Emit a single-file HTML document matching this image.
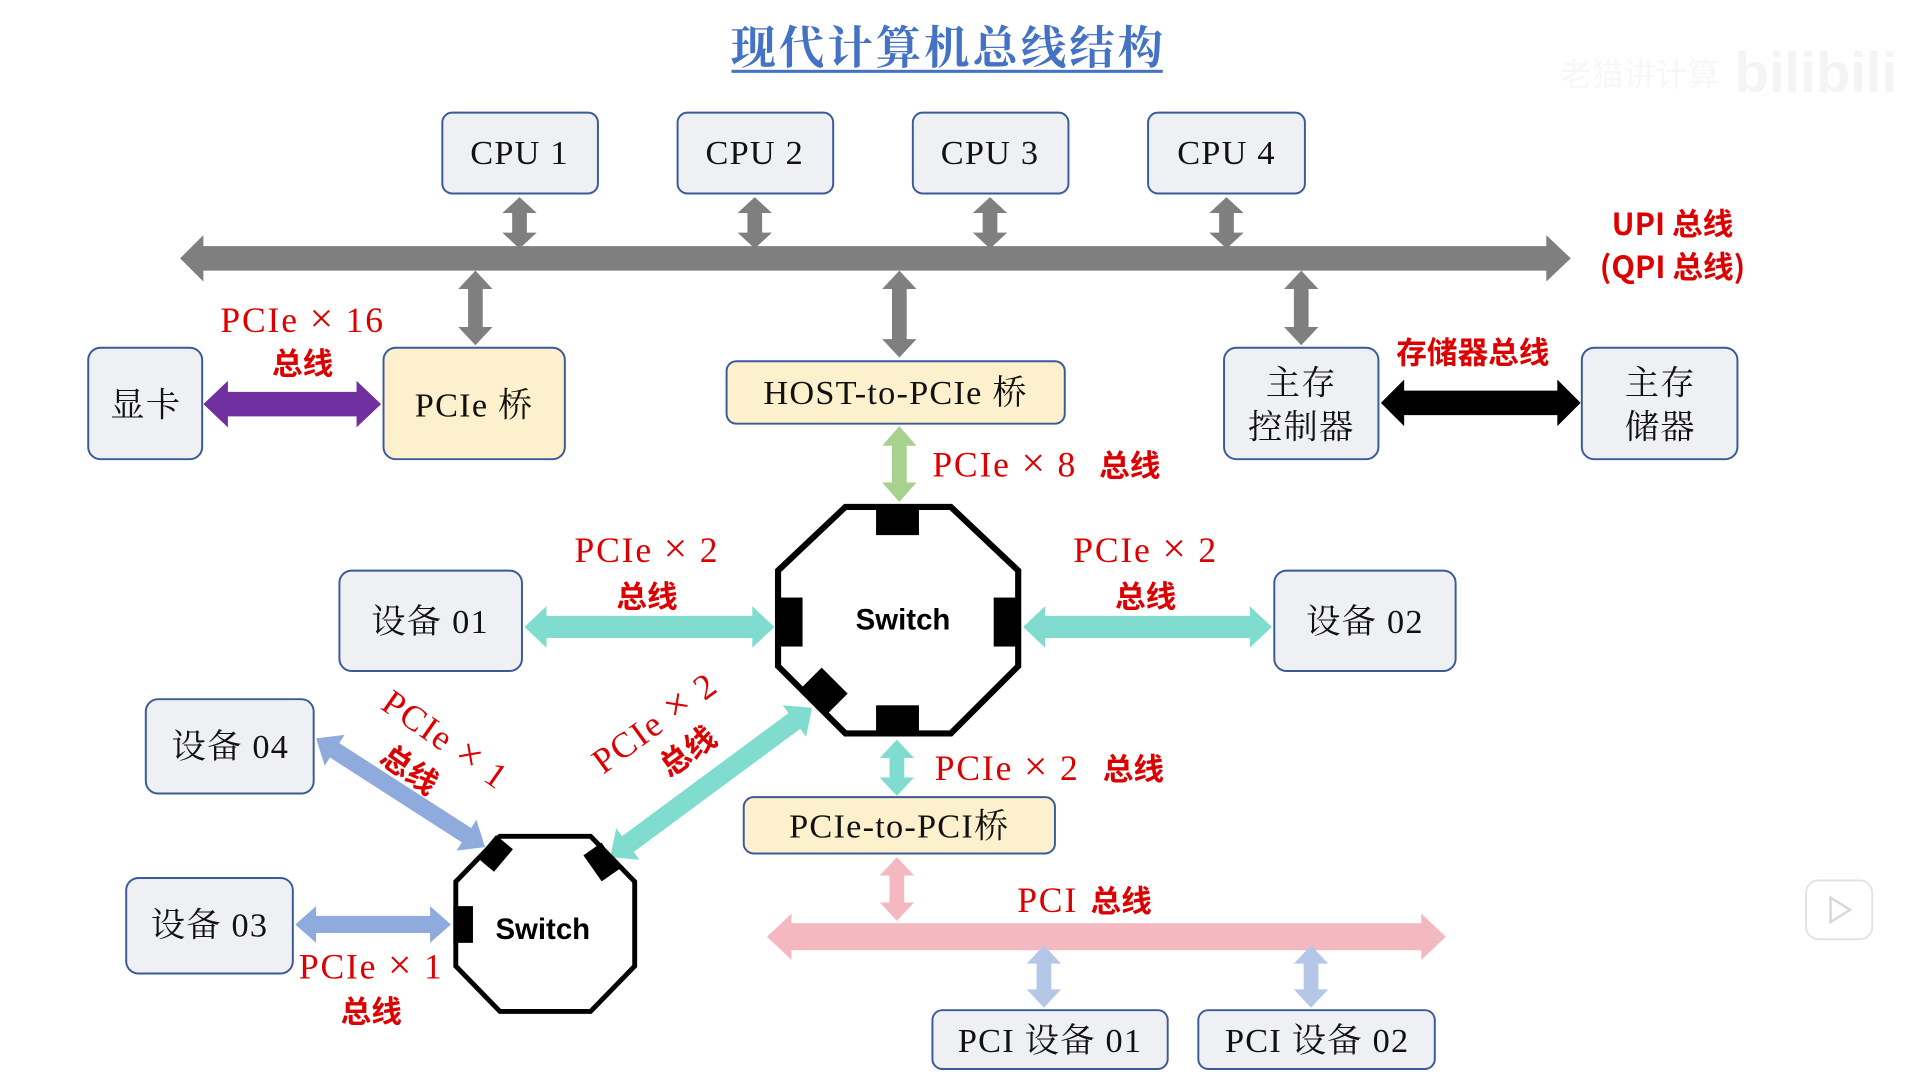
<!DOCTYPE html>
<html><head><meta charset="utf-8"><style>
html,body{margin:0;padding:0;background:#fff;width:1920px;height:1080px;overflow:hidden}
svg{display:block}
.bx{fill:#eef0f3;stroke:#3b5a99;stroke-width:1.6}
.yb{fill:#fdf0cc;stroke:#3b5a99;stroke-width:1.6}
.t{font-family:"Liberation Serif","Noto Serif CJK SC",serif;font-size:28px;fill:#111;text-anchor:middle;letter-spacing:1px}
.r{font-family:"Liberation Serif","Noto Serif CJK SC",serif;font-size:29px;fill:#d00;text-anchor:middle;letter-spacing:1.5px}
.x{font-size:34px}
.rc{font-family:"Noto Sans CJK SC",sans-serif;font-weight:bold;font-size:25px;fill:#d00;text-anchor:middle}
.sw{font-family:"Liberation Sans","DejaVu Sans",sans-serif;font-weight:bold;font-size:24px;fill:#000;text-anchor:middle}
</style></head><body>
<svg width="1920" height="1080" viewBox="0 0 1567 882" preserveAspectRatio="none" xmlns="http://www.w3.org/2000/svg">
<text x="774" y="52" font-family="Noto Serif CJK SC,serif" font-weight="bold" font-size="37" letter-spacing="2.5" fill="#4472c4" text-anchor="middle">现代计算机总线结构</text>
<rect x="597" y="57" width="352" height="2.5" fill="#4472c4"/>
<text x="1338" y="70" font-family="Noto Sans CJK SC,sans-serif" font-size="26" fill="#f7f7f7" text-anchor="middle">老猫讲计算</text>
<text x="1482" y="75" font-family="Liberation Sans,sans-serif" font-weight="bold" font-size="46" fill="#f4f4f4" text-anchor="middle">bilibili</text>

<rect class="bx" x="361" y="92" width="127" height="66" rx="8"/><text class="t" x="424" y="134">CPU 1</text>
<rect class="bx" x="553" y="92" width="127" height="66" rx="8"/><text class="t" x="616" y="134">CPU 2</text>
<rect class="bx" x="745" y="92" width="127" height="66" rx="8"/><text class="t" x="808" y="134">CPU 3</text>
<rect class="bx" x="937" y="92" width="128" height="66" rx="8"/><text class="t" x="1001" y="134">CPU 4</text>

<g fill="#7f7f7f">
<polygon points="424,161 438,174 430,174 430,190 438,190 424,203 410,190 418,190 418,174 410,174"/>
<polygon points="616,161 630,174 622,174 622,190 630,190 616,203 602,190 610,190 610,174 602,174"/>
<polygon points="808,161 822,174 814,174 814,190 822,190 808,203 794,190 802,190 802,174 794,174"/>
<polygon points="1001,161 1015,174 1007,174 1007,190 1015,190 1001,203 987,190 995,190 995,174 987,174"/>
<polygon points="388,221 402,236 394,236 394,267 402,267 388,282 374,267 382,267 382,236 374,236"/>
<polygon points="734,221 748,236 740,236 740,277 748,277 734,292 720,277 728,277 728,236 720,236"/>
<polygon points="1062,221 1076,236 1068,236 1068,267 1076,267 1062,282 1048,267 1056,267 1056,236 1048,236"/>
<polygon points="147,211 166,192 166,201 1262,201 1262,192 1282,211 1262,230 1262,221 166,221 166,230"/>
</g>
<text class="rc" x="1365" y="192" font-weight="normal">UPI 总线</text>
<text class="rc" x="1365" y="227">(QPI 总线)</text>

<rect class="bx" x="72" y="284" width="93" height="91" rx="10"/><text class="t" x="119" y="340">显卡</text>
<rect class="yb" x="313" y="284" width="148" height="91" rx="10"/><text class="t" x="387" y="340">PCIe 桥</text>
<polygon fill="#7030a0" points="166,330 186,311 186,320 291,320 291,311 311,330 291,349 291,340 186,340 186,349"/>
<text class="r" x="247" y="271">PCIe <tspan class="x">×</tspan> 16</text>
<text class="rc" x="247" y="306">总线</text>

<rect class="yb" x="593" y="295" width="276" height="51" rx="8"/><text class="t" x="731" y="330">HOST-to-PCIe 桥</text>

<rect class="bx" x="999" y="284" width="126" height="91" rx="10"/><text class="t" x="1062" y="322">主存</text><text class="t" x="1062" y="358">控制器</text>
<rect class="bx" x="1291" y="284" width="127" height="91" rx="10"/><text class="t" x="1355" y="322">主存</text><text class="t" x="1355" y="358">储器</text>
<polygon fill="#000" points="1127,329 1146,310 1146,319 1271,319 1271,310 1290,329 1271,348 1271,339 1146,339 1146,348"/>
<text class="rc" x="1202" y="297">存储器总线</text>

<polygon fill="#a9d18e" points="734,348 748,364 740,364 740,394 748,394 734,410 720,394 728,394 728,364 720,364"/>
<text class="r" x="820" y="389">PCIe <tspan class="x">×</tspan> 8</text><text class="rc" x="922" y="389">总线</text>

<polygon points="690,414 776,414 831,466 831,544 776,599 690,599 635,544 635,466" fill="#fff" stroke="#000" stroke-width="5"/>
<rect x="715" y="412" width="35" height="25" fill="#000"/>
<rect x="633" y="488" width="22" height="40" fill="#000"/>
<rect x="811" y="488" width="22" height="40" fill="#000"/>
<rect x="715" y="576" width="35" height="25" fill="#000"/>
<rect x="657" y="552" width="30" height="26" fill="#000" transform="rotate(45 672 565)"/>
<text class="sw" x="737" y="514">Switch</text>

<rect class="bx" x="277" y="466" width="149" height="82" rx="10"/><text class="t" x="351" y="517">设备 01</text>
<rect class="bx" x="1040" y="466" width="148" height="82" rx="10"/><text class="t" x="1114" y="517">设备 02</text>
<g fill="#7fdccf">
<polygon points="428,512 446,495 446,503 614,503 614,495 632,512 614,529 614,521 446,521 446,529"/>
<polygon points="835,512 853,495 853,503 1020,503 1020,495 1038,512 1020,529 1020,521 853,521 853,529"/>
<polygon points="732,604 746,619 738,619 738,635 746,635 732,650 718,635 726,635 726,619 718,619"/>
<g transform="translate(498,700) rotate(-36.5)"><polygon points="0,0 18,-16 18,-8 187,-8 187,-16 205,0 187,16 187,8 18,8 18,16"/></g>
</g>
<text class="r" x="528" y="459">PCIe <tspan class="x">×</tspan> 2</text><text class="rc" x="528" y="496">总线</text>
<text class="r" x="935" y="459">PCIe <tspan class="x">×</tspan> 2</text><text class="rc" x="935" y="496">总线</text>
<text class="r" x="822" y="637">PCIe <tspan class="x">×</tspan> 2</text><text class="rc" x="925" y="637">总线</text>

<rect class="yb" x="607" y="651" width="254" height="46" rx="8"/><text class="t" x="734" y="684">PCIe-to-PCI桥</text>

<g fill="#f4b8c0">
<polygon points="732,700 746,715 738,715 738,737 746,737 732,752 718,737 726,737 726,715 718,715"/>
<polygon points="626,765 646,746 646,754 1160,754 1160,746 1180,765 1160,784 1160,776 646,776 646,784"/>
</g>
<text class="r" x="855" y="745">PCI</text><text class="rc" x="915" y="745">总线</text>
<g fill="#b4c7e7">
<polygon points="852,772 866,787 858,787 858,808 866,808 852,823 838,808 846,808 846,787 838,787"/>
<polygon points="1070,772 1084,787 1076,787 1076,808 1084,808 1070,823 1056,808 1064,808 1064,787 1056,787"/>
</g>
<rect class="bx" x="761" y="825" width="192" height="48" rx="8"/><text class="t" x="857" y="859">PCI 设备 01</text>
<rect class="bx" x="978" y="825" width="193" height="48" rx="8"/><text class="t" x="1075" y="859">PCI 设备 02</text>

<polygon points="408,683 482,683 518,720 518,789 482,826 408,826 372,789 372,720" fill="#fff" stroke="#000" stroke-width="4"/>
<rect x="370" y="740" width="16" height="30" fill="#000"/>
<rect x="392" y="688" width="24" height="18" fill="#000" transform="rotate(-50 404 697)"/>
<rect x="478" y="695" width="26" height="18" fill="#000" transform="rotate(55 491 704)"/>
<text class="sw" x="443" y="767">Switch</text>

<rect class="bx" x="119" y="571" width="137" height="77" rx="10"/><text class="t" x="188" y="619">设备 04</text>
<rect class="bx" x="103" y="717" width="136" height="78" rx="10"/><text class="t" x="171" y="765">设备 03</text>
<g fill="#8faadc">
<polygon points="241,755 258,740 258,748 351,748 351,740 368,755 351,770 351,762 258,762 258,770"/>
<g transform="translate(258,603) rotate(32.8)"><polygon points="0,0 18,-15 18,-7 146,-7 146,-15 164,0 146,15 146,7 18,7 18,15"/></g>
</g>
<g transform="translate(358,612) rotate(35)"><text class="r" x="0" y="0">PCIe <tspan class="x">×</tspan> 1</text><text class="rc" x="-10" y="36">总线</text></g>
<g transform="translate(540,598) rotate(-36)"><text class="r" x="0" y="0">PCIe <tspan class="x">×</tspan> 2</text><text class="rc" x="8" y="34">总线</text></g>
<text class="r" x="303" y="799">PCIe <tspan class="x">×</tspan> 1</text><text class="rc" x="303" y="835">总线</text>

<rect x="1474" y="719" width="54" height="48" rx="10" fill="#fff" stroke="#e3e3e3" stroke-width="1.5"/>
<polygon points="1494,733 1510,743 1494,753" fill="none" stroke="#d8d8d8" stroke-width="2"/>
</svg>
</body></html>
